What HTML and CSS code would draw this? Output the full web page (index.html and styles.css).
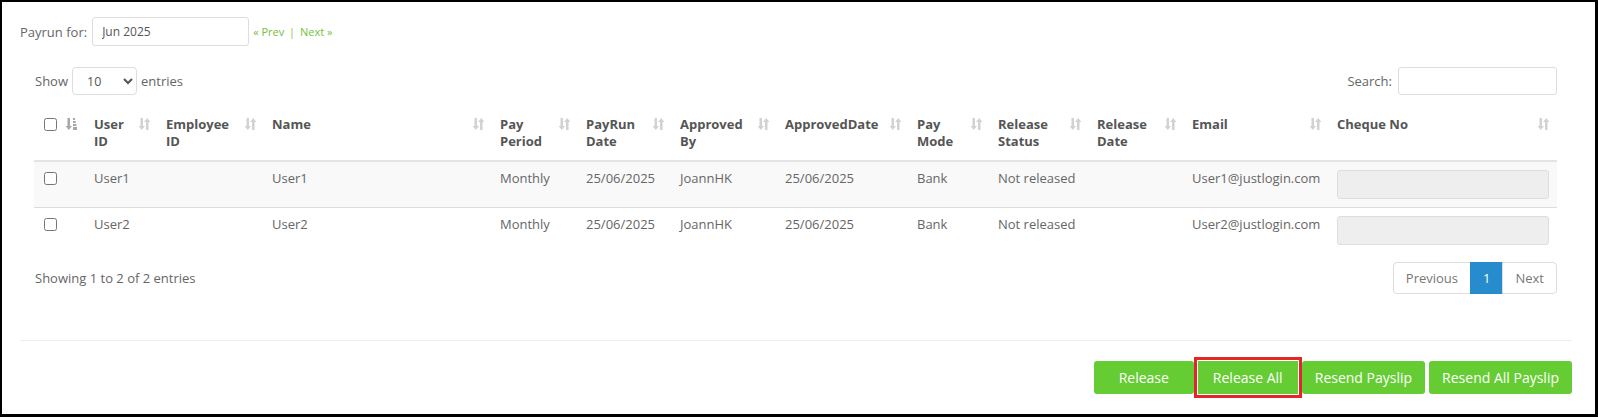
FILE: index.html
```html
<!DOCTYPE html>
<html lang="en">
<head>
    <meta charset="UTF-8">
    <meta name="viewport" content="width=device-width, initial-scale=1.0">
    <title>Payslip Release</title>
    <link rel="stylesheet" href="styles.css">
</head>
<body>

<div class="page">

    <!-- Payrun selector -->
    <div class="payrun-bar">
        <label for="payrun">Payrun for:</label>
        <input type="text" id="payrun" class="payrun-input" value="Jun 2025">
        <span class="payrun-nav"><a href="#">&laquo; Prev</a> <span class="sep">|</span> <a href="#">Next &raquo;</a></span>
    </div>

    <div class="dt-wrapper">
        <div class="dt-top">
            <div class="dt-length">
                <label>Show</label>
                <select>
                    <option>10</option>
                    <option>25</option>
                    <option>50</option>
                </select>
                <label>entries</label>
            </div>
            <div class="dt-search">
                <label for="search">Search:</label>
                <input type="text" id="search">
            </div>
        </div>

        <table class="dt-table">
            <colgroup>
                <col style="width:52px"><col style="width:72px"><col style="width:106px"><col style="width:228px">
                <col style="width:86px"><col style="width:94px"><col style="width:105px"><col style="width:132px">
                <col style="width:81px"><col style="width:99px"><col style="width:95px"><col style="width:145px">
                <col style="width:228px">
            </colgroup>
            <thead>
                <tr>
                    <th class="sorted"><input type="checkbox">
                        <svg class="sort-icon" width="11" height="12" viewBox="0 0 11 12"><path d="M1.5 0h2.5v8h2l-3.25 4-3.25-4h2z"/><rect x="7" y="0" width="2" height="2"/><rect x="7" y="3" width="2.7" height="2"/><rect x="7" y="6" width="3.4" height="2"/><rect x="7" y="9" width="4" height="3"/></svg>
                    </th>
                    <th>User ID<svg class="sort-icon" width="11" height="12" viewBox="0 0 11 12"><path d="M1.5 0h2.5v8h2l-3.25 4-3.25-4h2z"/><path d="M7 12h2.5v-8h2l-3.25-4-3.25 4h2z"/></svg></th>
                    <th>Employee ID<svg class="sort-icon" width="11" height="12" viewBox="0 0 11 12"><path d="M1.5 0h2.5v8h2l-3.25 4-3.25-4h2z"/><path d="M7 12h2.5v-8h2l-3.25-4-3.25 4h2z"/></svg></th>
                    <th>Name<svg class="sort-icon" width="11" height="12" viewBox="0 0 11 12"><path d="M1.5 0h2.5v8h2l-3.25 4-3.25-4h2z"/><path d="M7 12h2.5v-8h2l-3.25-4-3.25 4h2z"/></svg></th>
                    <th>Pay Period<svg class="sort-icon" width="11" height="12" viewBox="0 0 11 12"><path d="M1.5 0h2.5v8h2l-3.25 4-3.25-4h2z"/><path d="M7 12h2.5v-8h2l-3.25-4-3.25 4h2z"/></svg></th>
                    <th>PayRun Date<svg class="sort-icon" width="11" height="12" viewBox="0 0 11 12"><path d="M1.5 0h2.5v8h2l-3.25 4-3.25-4h2z"/><path d="M7 12h2.5v-8h2l-3.25-4-3.25 4h2z"/></svg></th>
                    <th>Approved By<svg class="sort-icon" width="11" height="12" viewBox="0 0 11 12"><path d="M1.5 0h2.5v8h2l-3.25 4-3.25-4h2z"/><path d="M7 12h2.5v-8h2l-3.25-4-3.25 4h2z"/></svg></th>
                    <th>ApprovedDate<svg class="sort-icon" width="11" height="12" viewBox="0 0 11 12"><path d="M1.5 0h2.5v8h2l-3.25 4-3.25-4h2z"/><path d="M7 12h2.5v-8h2l-3.25-4-3.25 4h2z"/></svg></th>
                    <th>Pay Mode<svg class="sort-icon" width="11" height="12" viewBox="0 0 11 12"><path d="M1.5 0h2.5v8h2l-3.25 4-3.25-4h2z"/><path d="M7 12h2.5v-8h2l-3.25-4-3.25 4h2z"/></svg></th>
                    <th>Release Status<svg class="sort-icon" width="11" height="12" viewBox="0 0 11 12"><path d="M1.5 0h2.5v8h2l-3.25 4-3.25-4h2z"/><path d="M7 12h2.5v-8h2l-3.25-4-3.25 4h2z"/></svg></th>
                    <th>Release Date<svg class="sort-icon" width="11" height="12" viewBox="0 0 11 12"><path d="M1.5 0h2.5v8h2l-3.25 4-3.25-4h2z"/><path d="M7 12h2.5v-8h2l-3.25-4-3.25 4h2z"/></svg></th>
                    <th>Email<svg class="sort-icon" width="11" height="12" viewBox="0 0 11 12"><path d="M1.5 0h2.5v8h2l-3.25 4-3.25-4h2z"/><path d="M7 12h2.5v-8h2l-3.25-4-3.25 4h2z"/></svg></th>
                    <th>Cheque No<svg class="sort-icon" width="11" height="12" viewBox="0 0 11 12"><path d="M1.5 0h2.5v8h2l-3.25 4-3.25-4h2z"/><path d="M7 12h2.5v-8h2l-3.25-4-3.25 4h2z"/></svg></th>
                </tr>
            </thead>
            <tbody>
                <tr class="odd">
                    <td><input type="checkbox"></td>
                    <td>User1</td>
                    <td></td>
                    <td>User1</td>
                    <td>Monthly</td>
                    <td>25/06/2025</td>
                    <td>JoannHK</td>
                    <td>25/06/2025</td>
                    <td>Bank</td>
                    <td>Not released</td>
                    <td></td>
                    <td>User1@justlogin.com</td>
                    <td><input type="text" class="cheque-input" readonly></td>
                </tr>
                <tr>
                    <td><input type="checkbox"></td>
                    <td>User2</td>
                    <td></td>
                    <td>User2</td>
                    <td>Monthly</td>
                    <td>25/06/2025</td>
                    <td>JoannHK</td>
                    <td>25/06/2025</td>
                    <td>Bank</td>
                    <td>Not released</td>
                    <td></td>
                    <td>User2@justlogin.com</td>
                    <td><input type="text" class="cheque-input" readonly></td>
                </tr>
            </tbody>
        </table>

        <div class="dt-bottom">
            <div class="dt-info">Showing 1 to 2 of 2 entries</div>
            <ul class="pagination">
                <li><a href="#">Previous</a></li>
                <li class="active"><a href="#">1</a></li>
                <li><a href="#">Next</a></li>
            </ul>
        </div>
    </div>

    <hr class="divider">

    <!-- Action buttons -->
    <div class="actions">
        <button class="btn-green">Release</button>
        <button class="btn-green highlighted">Release All</button>
        <button class="btn-green">Resend Payslip</button>
        <button class="btn-green">Resend All Payslip</button>
    </div>

</div>

</body>
</html>
```

FILE: styles.css
```css
html, body {
    margin: 0;
    padding: 0;
}

body {
    height: 417px;
    box-sizing: border-box;
    border-style: solid;
    border-color: #000;
    border-width: 2px 3px 3px 2px;
    background-color: #fff;
    font-family: "Open Sans", "DejaVu Sans", sans-serif;
    font-size: 13px;
    color: #666;
    overflow: hidden;
}

.page {
    padding: 15px 23px 0 18px;
}

/* Payrun bar */
.payrun-bar {
    display: flex;
    align-items: center;
    height: 29px;
}

.payrun-bar label {
    margin-right: 5px;
}

.payrun-input {
    width: 157px;
    height: 29px;
    box-sizing: border-box;
    padding: 0 9px;
    border: 1px solid #ddd;
    border-radius: 3px;
    font-family: inherit;
    font-size: 12px;
    color: #555;
}

.payrun-nav {
    margin-left: 4px;
    font-size: 11px;
    color: #8cc63f;
}

.payrun-nav a {
    color: #72c23a;
    text-decoration: none;
}

.payrun-nav .sep {
    margin: 0 2px;
}

/* Datatable wrapper */
.dt-wrapper {
    margin-top: 21px;
    padding: 0 15px 0 14px;
}

.dt-top {
    display: flex;
    justify-content: space-between;
    align-items: center;
    height: 28px;
}

.dt-length {
    display: flex;
    align-items: center;
    gap: 4px;
    padding-left: 1px;
}

.dt-length select {
    width: 65px;
    height: 28px;
    padding: 0 8px 0 10px;
    border: 1px solid #ddd;
    border-radius: 4px;
    background-color: #fff;
    font-family: inherit;
    font-size: 12.5px;
    color: #555;
}

.dt-search {
    display: flex;
    align-items: center;
    gap: 6px;
}

.dt-search input {
    width: 159px;
    height: 28px;
    box-sizing: border-box;
    border: 1px solid #ddd;
    border-radius: 3px;
}

/* Table */
.dt-table {
    margin-top: 13px;
    width: 1523px;
    table-layout: fixed;
    border-collapse: collapse;
}

.dt-table th {
    position: relative;
    padding: 8px 30px 10px 8px;
    text-align: left;
    vertical-align: top;
    font-weight: bold;
    color: #555;
    line-height: 17px;
    border-bottom: 2px solid #e4e4e4;
}

.dt-table th:first-child {
    padding-left: 10px;
}

.dt-table td {
    padding: 8px;
    vertical-align: top;
    line-height: 17px;
    border-top: 1px solid #ddd;
}

.dt-table td:first-child {
    padding-left: 10px;
}

.dt-table input[type="checkbox"] {
    margin: 2px 0 0 0;
    width: 13px;
    height: 13px;
}

.dt-table tr.odd td {
    background-color: #f9f9f9;
}

.sort-icon {
    position: absolute;
    top: 10px;
    right: 8px;
    fill: #d2d2d2;
}

.sorted .sort-icon {
    right: 9px;
    fill: #a8a8a8;
}

.cheque-input {
    display: block;
    width: 100%;
    height: 29px;
    box-sizing: border-box;
    border: 1px solid #ddd;
    border-radius: 3px;
    background-color: #eee;
}

/* Bottom of table */
.dt-bottom {
    display: flex;
    justify-content: space-between;
    align-items: center;
    margin-top: 9px;
}

.dt-info {
    padding-left: 1px;
}

.pagination {
    display: flex;
    margin: 0;
    padding: 0;
    list-style: none;
}

.pagination a {
    display: block;
    height: 30px;
    line-height: 30px;
    padding: 0 12px;
    border: 1px solid #ddd;
    margin-left: -1px;
    color: #777;
    font-size: 13px;
    text-decoration: none;
}

.pagination li:first-child a {
    border-radius: 4px 0 0 4px;
    margin-left: 0;
}

.pagination li:last-child a {
    border-radius: 0 4px 4px 0;
}

.pagination .active a {
    background-color: #268ccd;
    border-color: #268ccd;
    color: #fff;
}

.divider {
    margin: 46px 0 0 0;
    border: none;
    border-top: 1px solid #eee;
}

/* Buttons */
.actions {
    display: flex;
    justify-content: flex-end;
    gap: 4px;
    margin-top: 20px;
}

.btn-green {
    min-width: 100px;
    height: 33px;
    padding: 0 13px;
    background-color: #66cc33;
    color: #fff;
    border: none;
    border-radius: 3px;
    font-family: inherit;
    font-size: 14px;
    cursor: pointer;
}

.btn-green:hover {
    background-color: #5bbb2c;
}

.btn-green.highlighted {
    outline: 3px solid #e3262b;
    outline-offset: 1px;
    border-radius: 0;
}
```
